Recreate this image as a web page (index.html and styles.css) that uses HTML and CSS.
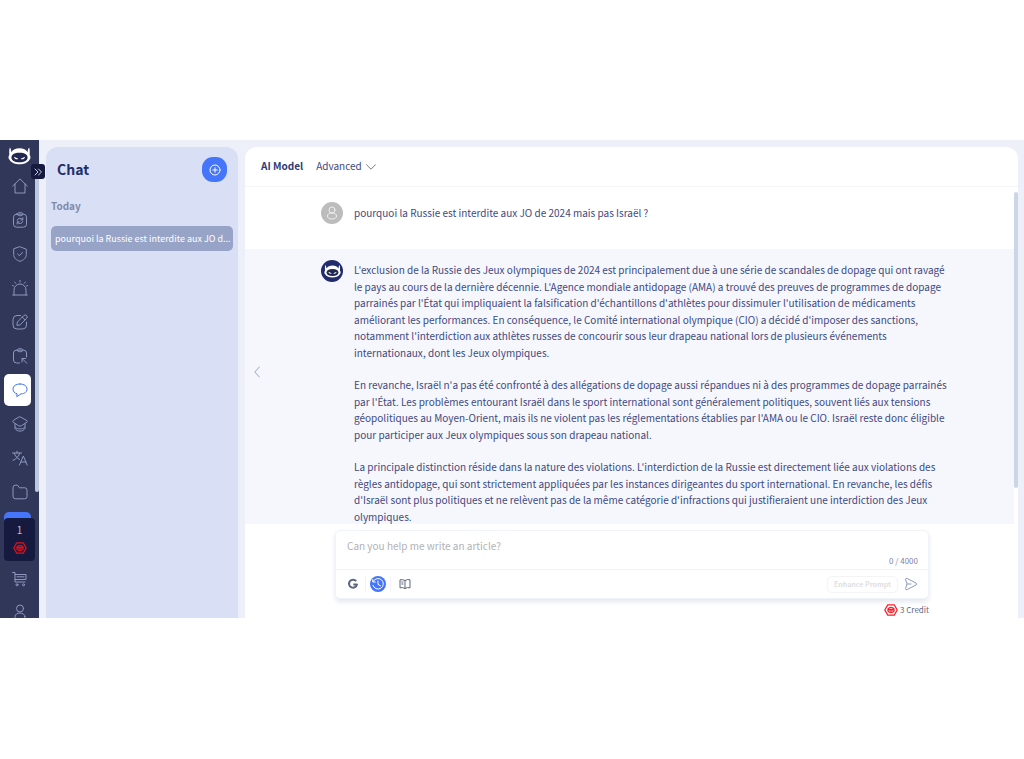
FILE: index.html
```html
<!DOCTYPE html>
<html lang="fr">
<head>
<meta charset="utf-8">
<meta name="viewport" content="width=device-width, initial-scale=1">
<title>Chat</title>
<link rel="stylesheet" href="styles.css">
</head>
<body>
<svg class="defs" aria-hidden="true">
  <symbol id="robot" viewBox="0 0 24 20">
    <path fill="currentColor" d="M1.800 1.500C3 2.500 3.300 4.500 3.300 6.500C5 4 8 2.300 12 2.300S19 4 20.700 6.500C20.700 4.500 21 2.500 22.200 1.500C22.900 4 22.900 6.500 22.700 9.500C23.900 10.500 23.900 13.500 22.500 14.500C20.500 18 16.500 19.200 12 19.200S3.500 18 1.500 14.500C.1 13.500 .1 10.500 1.300 9.500C1.100 6.500 1.100 4 1.800 1.500Z"/>
    <path class="robot-visor" d="M12 7C6.500 7 3.500 9 3.500 12S6.500 17 12 17S20.500 15 20.500 12S17.500 7 12 7Z"/>
    <path fill="currentColor" d="M6.200 11.200L10.800 13.300C9.500 14.700 6.800 14.200 6.200 11.200ZM17.800 11.200L13.200 13.300C14.500 14.700 17.200 14.200 17.800 11.200Z"/>
  </symbol>
  <symbol id="coin" viewBox="0 0 14 12">
    <path d="M3.800.8H10.200L13.200 6L10.200 11.200H3.800L.8 6Z"/>
    <path d="M4 4.800C5.500 2.800 8.500 2.800 10 4.800M4 7.200C5.500 9.200 8.500 9.200 10 7.200V5.500H4Z"/>
    <path d="M5.800 6.800H8.200"/>
  </symbol>
</svg>
<div class="app">
  <nav class="rail" aria-label="Navigation">
    <div class="rail-logo"><svg class="logo" aria-hidden="true"><use href="#robot"/></svg></div>
    <a class="rail-item" href="#" aria-label="Home"><svg class="icon" viewBox="0 0 16 16"><path d="M.8 8L8 .9L15.200 8M3 6V15H13V6"/></svg></a>
    <a class="rail-item" href="#" aria-label="Tasks"><svg class="icon" viewBox="0 0 16 16"><rect x="1.500" y="2.200" width="13" height="13" rx="3"/><path d="M5 2.200C5 0 11 0 11 2.200S5 4.200 5 2.200M5.300 8.300A2.800 2.800 0 0 1 10.300 7.400M10.800 5.800V7.900H8.800M10.700 9.500A2.800 2.800 0 0 1 5.700 10.400M5.200 12V9.900H7.200"/></svg></a>
    <a class="rail-item" href="#" aria-label="Security"><svg class="icon" viewBox="0 0 16 16"><path d="M8 .8L14.300 3.200V8.500C14.300 12 11.500 14.300 8 15.300C4.500 14.300 1.700 12 1.700 8.500V3.200ZM5.600 8L7.400 9.700L10.500 6.500"/></svg></a>
    <a class="rail-item" href="#" aria-label="Alerts"><svg class="icon" viewBox="0 0 16 16"><path d="M.8 15H15.200M2 15V10A6 6 0 0 1 14 10V15M8 .3V2M2.600 2L3.600 3.200M13.400 2L12.400 3.200M.4 5.500L1.500 6M15.600 5.500L14.500 6"/></svg></a>
    <a class="rail-item" href="#" aria-label="Write"><svg class="icon" viewBox="0 0 16 16"><path d="M8.500 1.500H5Q1 1.500 1 5.500V11Q1 15 5 15H10.500Q14.500 15 14.500 11V8M5 11L5.400 8L11.700 1.600A1.800 1.800 0 0 1 14.600 4.400L8.200 10.700ZM10.300 3L13 5.800"/></svg></a>
    <a class="rail-item" href="#" aria-label="Clipboard"><svg class="icon" viewBox="0 0 16 16"><path d="M7.500 15H4.500Q1.500 15 1.500 12V5Q1.500 2.200 4.500 2.200H11.500Q14.500 2.200 14.500 5V9M5 2.200C5 0 11 0 11 2.200S5 4.200 5 2.200M10 10.500L15 15.300M10 14V10.500H13.500"/></svg></a>
    <a class="rail-item active" href="#" aria-label="Chat" aria-current="page"><svg class="icon" viewBox="0 0 16 16"><path d="M8 2C3.500 2 1 4.200 1 7S3 11.500 5 11.700L4.800 14.700L9 11.900C13 11.700 15 9.800 15 7S12.500 2 8 2Z"/></svg></a>
    <a class="rail-item" href="#" aria-label="Learn"><svg class="icon" viewBox="0 0 16 16"><path d="M8 .8L14.800 4.500Q15.800 5.300 14.800 6.200L9.500 9.700Q8 10.500 6.500 9.700L1.200 6.200Q.2 5.300 1.200 4.500ZM3 8V12.500C5 16 11 16 13 12.500V8M3.200 11.500C6 13.500 10 13.500 12.800 11.500"/></svg></a>
    <a class="rail-item" href="#" aria-label="Translate"><svg class="icon" viewBox="0 0 16 16"><path d="M.5 3H9.500M5 1.200V3M2.200 3C3 6 5 8.200 7.500 9.500M7.800 3C7 6 4.500 8.800 1 10.500M7.500 15L11.300 6L15.200 15M8.800 12H13.800"/></svg></a>
    <a class="rail-item" href="#" aria-label="Files"><svg class="icon" viewBox="0 0 16 16"><path d="M1 3.500Q1 1.200 3.200 1.200H5.500L7.500 3.800H12.800Q15 3.800 15 6V12.500Q15 14.800 12.800 14.800H3.200Q1 14.800 1 12.500Z"/></svg></a>
    <div class="balance">
      <span>1</span>
      <svg class="coin" aria-hidden="true"><use href="#coin"/></svg>
    </div>
    <a class="rail-item" href="#" aria-label="Shop"><svg class="icon" viewBox="0 0 16 16"><path d="M.5 1.500H3V11H13M3 3.500H14V8.500H3M5 5.800H12"/><circle cx="5" cy="13.800" r="1"/><circle cx="11.500" cy="13.800" r="1"/></svg></a>
    <a class="rail-item" href="#" aria-label="Profile"><svg class="icon" viewBox="0 0 16 16"><circle cx="8" cy="4.500" r="3.500"/><ellipse cx="8" cy="12.500" rx="5" ry="3.500"/></svg></a>
    <span class="rail-scroll"></span>
    <button class="expand" type="button" aria-label="Expand"><svg viewBox="0 0 8 8"><path d="M1 1L4 4L1 7M4.500 1L7.500 4L4.500 7"/></svg></button>
  </nav>

  <aside class="history">
    <header class="history-head">
      <h1>Chat</h1>
      <button class="new-chat" type="button" aria-label="New chat"><svg viewBox="0 0 12 12"><circle cx="6" cy="6" r="5"/><path d="M6 3.800V8.200M3.800 6H8.200"/></svg></button>
    </header>
    <h2>Today</h2>
    <a class="history-item" href="#">pourquoi la Russie est interdite aux JO d...</a>
  </aside>

  <main class="chat">
    <header class="model-bar">
      <strong>AI Model</strong>
      <button class="model" type="button">Advanced <svg viewBox="0 0 10 6"><path d="M.5 .7L5 5.200L9.500 .7"/></svg></button>
    </header>
    <div class="thread">
      <section class="message">
        <span class="avatar user"><svg viewBox="0 0 12 14"><circle cx="6" cy="4" r="3"/><ellipse cx="6" cy="10" rx="4.500" ry="3"/></svg></span>
        <div class="text"><p>pourquoi la Russie est interdite aux JO de 2024 mais pas Israël ?</p></div>
      </section>
      <section class="message reply">
        <span class="avatar bot"><svg aria-hidden="true"><use href="#robot"/></svg></span>
        <div class="text">
          <p>L'exclusion de la Russie des Jeux olympiques de 2024 est principalement due à une série de scandales de dopage qui ont ravagé le pays au cours de la dernière décennie. L'Agence mondiale antidopage (AMA) a trouvé des preuves de programmes de dopage parrainés par l'État qui impliquaient la falsification d'échantillons d'athlètes pour dissimuler l'utilisation de médicaments améliorant les performances. En conséquence, le Comité international olympique (CIO) a décidé d'imposer des sanctions, notamment l'interdiction aux athlètes russes de concourir sous leur drapeau national lors de plusieurs événements internationaux, dont les Jeux olympiques.</p>
          <p>En revanche, Israël n'a pas été confronté à des allégations de dopage aussi répandues ni à des programmes de dopage parrainés par l'État. Les problèmes entourant Israël dans le sport international sont généralement politiques, souvent liés aux tensions géopolitiques au Moyen-Orient, mais ils ne violent pas les réglementations établies par l'AMA ou le CIO. Israël reste donc éligible pour participer aux Jeux olympiques sous son drapeau national.</p>
          <p>La principale distinction réside dans la nature des violations. L'interdiction de la Russie est directement liée aux violations des règles antidopage, qui sont strictement appliquées par les instances dirigeantes du sport international. En revanche, les défis d'Israël sont plus politiques et ne relèvent pas de la même catégorie d'infractions qui justifieraient une interdiction des Jeux olympiques.</p>
        </div>
      </section>
      <span class="thread-scroll"></span>
    </div>
    <button class="collapse" type="button" aria-label="Collapse"><svg viewBox="0 0 6 12"><path d="M5.300 1L.8 6L5.300 11"/></svg></button>
    <div class="composer-area">
      <form class="composer">
        <div class="prompt">
          <textarea rows="1" aria-label="Message" placeholder="Can you help me write an article?"></textarea>
          <span class="count">0 / 4000</span>
        </div>
        <div class="tools">
          <button class="tool" type="button" aria-label="Google search"><svg viewBox="0 0 12 12"><path class="g" d="M9.200 3.200A4 4 0 1 0 10 6.400H6.300"/></svg></button>
          <button class="tool" type="button" aria-label="History"><svg class="clock" viewBox="0 0 16 16"><circle class="disc" cx="8" cy="8" r="8"/><path d="M3.200 5.500A5.300 5.300 0 1 1 2.900 9.300M2.800 3.500V6H5.300M8 5V8.300L10.500 9.800"/></svg></button>
          <button class="tool" type="button" aria-label="Prompt library"><svg viewBox="0 0 12 12"><path d="M6 2.500Q3.500 1 1 1.800V9.800Q3.500 9 6 10.500Q8.500 9 11 9.800V1.800Q8.500 1 6 2.500V10.500M2.700 4H4M2.700 6H4"/></svg></button>
          <button class="enhance" type="button" disabled>Enhance Prompt</button>
          <button class="send" type="submit" aria-label="Send"><svg viewBox="0 0 14 14"><path d="M1.500 2.500Q1.500 .8 3.200 1.500L12 6Q13.500 7 12 8L3.200 12.500Q1.500 13.200 1.500 11.500L3 7ZM3 7H7"/></svg></button>
        </div>
      </form>
      <div class="cost"><svg class="coin" aria-hidden="true"><use href="#coin"/></svg>3 Credit</div>
    </div>
  </main>
</div>
</body>
</html>
```

FILE: styles.css
```css
* { box-sizing: border-box; }

body {
  margin: 0;
  height: 100vh;
  padding: 140px 0 141px;
  display: flex;
  flex-direction: column;
  background: #fff;
  color: #3f497f;
  font-family: "Noto Sans CJK SC", "Noto Sans", sans-serif;
  font-size: 10px;
  line-height: 1.65;
}

h1, h2, p { margin: 0; }

button {
  border: 0;
  padding: 0;
  background: none;
  color: inherit;
  font: inherit;
  cursor: pointer;
}

svg {
  display: block;
  fill: none;
  stroke: currentColor;
  stroke-linecap: round;
  stroke-linejoin: round;
}

.defs { position: absolute; width: 0; height: 0; }
#robot { stroke: none; }

.app {
  flex: 1;
  min-height: 0;
  display: flex;
  background: #edf0f9;
}

/* Icon rail */
.rail {
  position: relative;
  z-index: 1;
  flex: none;
  width: 39px;
  padding-left: 4px;
  display: flex;
  flex-direction: column;
  background: #313759;
  color: #8d97bd;
}

.rail-logo {
  flex: none;
  height: 29px;
  padding: 6px 0 0 4px;
  color: #fff;
}

.logo { width: 23px; height: 19px; }
.robot-visor { fill: #202850; }

.rail-item {
  flex: none;
  width: 27px;
  height: 34px;
  padding-right: 3px;
  display: flex;
  align-items: center;
  justify-content: flex-end;
  color: inherit;
}

.rail-item:last-of-type {
  flex: 0 1 24px;
  min-height: 0;
  padding-top: 8px;
  align-items: flex-start;
  overflow: hidden;
}

.rail-item.active {
  height: 32px;
  margin: 1px 0;
  border-radius: 5px;
  background: #fff;
  color: #4475fa;
}

.icon { flex: none; width: 16px; height: 16px; }

.balance {
  position: relative;
  flex: none;
  width: 31px;
  height: 43px;
  margin: 9px 0 1px;
  padding: 4px 0 7px;
  display: flex;
  flex-direction: column;
  align-items: center;
  justify-content: space-between;
  border-radius: 4px;
  background: #151a3e;
  color: #b9c0dc;
}

.balance::before {
  content: "";
  position: absolute;
  left: 0;
  top: -6px;
  width: 27px;
  height: 10px;
  z-index: -1;
  border-radius: 5px 5px 0 0;
  background: #4475fa;
}

.coin { width: 14px; height: 12px; color: #e0121f; stroke-width: 1.3; }

.rail-scroll {
  position: absolute;
  right: 0;
  top: 28px;
  width: 4px;
  height: 324px;
  border-radius: 2px;
  background: #bdc9de;
}

.expand {
  position: absolute;
  left: 31px;
  top: 24px;
  width: 14px;
  height: 15px;
  display: grid;
  place-items: center;
  border-radius: 3px;
  background: #151a3e;
  color: #c9cfe6;
}

.expand svg { width: 8px; height: 8px; }

/* Conversation list */
.history {
  flex: none;
  width: 192px;
  margin: 7px 7px 0;
  padding: 10px 5px 0;
  border-radius: 12px 12px 0 0;
  background: #d9dff4;
}

.history-head {
  display: flex;
  align-items: center;
  justify-content: space-between;
  padding: 0 6px;
}

h1 {
  color: #232d6b;
  font-size: 14px;
  font-weight: 700;
  line-height: 22px;
  padding-bottom: 2px;
}

.new-chat {
  width: 25px;
  height: 25px;
  display: grid;
  place-items: center;
  border-radius: 11px;
  background: #4475fa;
  color: #fff;
}

.new-chat svg { width: 12px; height: 12px; }

h2 {
  margin: 16px 0 12px;
  color: #7f8bab;
  font-size: 10px;
  font-weight: 700;
  line-height: 16px;
}

.history-item {
  display: block;
  padding-left: 4px;
  overflow: hidden;
  border-radius: 5px;
  background: #98a4c7;
  color: #fff;
  font-size: 9px;
  line-height: 25px;
  text-decoration: none;
  white-space: nowrap;
}

/* Conversation */
.chat {
  position: relative;
  flex: 1;
  min-width: 0;
  margin: 7px 6px 0 0;
  display: flex;
  flex-direction: column;
  border-radius: 12px 12px 0 0;
  background: #fff;
}

.model-bar {
  flex: none;
  height: 40px;
  padding: 0 16px;
  display: flex;
  align-items: center;
  gap: 13px;
  border-bottom: 1px solid #f3f5fb;
}

.model-bar strong { color: #303b76; font-weight: 700; }

.model {
  display: flex;
  align-items: center;
  gap: 4px;
}

.model svg { width: 10px; height: 6px; color: #747a8c; }

.thread {
  position: relative;
  flex: 1;
  min-height: 0;
  overflow: hidden;
}

.message {
  display: flex;
  align-items: flex-start;
  gap: 11px;
  margin-right: 4px;
  padding: 15px 66px 25px 76px;
}

.reply {
  padding-top: 11px;
  background: #f5f7fc;
}

.avatar {
  flex: none;
  width: 22px;
  height: 22px;
  display: grid;
  place-items: center;
  border-radius: 50%;
}

.user { background: #bcbcbc; color: #eee; }
.user svg { width: 12px; height: 14px; }
.bot { background: #222b6b; color: #fff; }
.bot svg { width: 17px; height: 14px; }

.text {
  flex: 1;
  display: grid;
  gap: 16px;
  padding-top: 3px;
}

.reply .text { padding-top: 2px; }

.thread-scroll {
  position: absolute;
  right: 0;
  top: 5px;
  width: 4px;
  height: 296px;
  border-radius: 2px;
  background: #cbd6e6;
}

.collapse {
  position: absolute;
  left: 9px;
  top: 219px;
  color: #98a3c0;
}

.collapse svg { width: 6px; height: 12px; }

/* Composer */
.composer-area {
  flex: none;
  padding: 6px 89px 0 90px;
}

.composer {
  border: 1px solid #f1f3fa;
  border-radius: 5px;
  background: #fff;
  box-shadow: 0 3px 5px #e6e8ef;
}

.prompt {
  height: 39px;
  padding: 7px 10px 0 11px;
  border-bottom: 1px solid #f1f3fa;
}

textarea {
  display: block;
  width: 100%;
  height: 17px;
  padding: 0;
  border: 0;
  outline: 0;
  resize: none;
  overflow: hidden;
  background: none;
  color: #3f497f;
  font: inherit;
}

textarea::placeholder { color: #b2b2b5; }

.count {
  display: block;
  color: #7e849f;
  font-size: 8px;
  line-height: 12px;
  text-align: right;
}

.tools {
  height: 28px;
  padding: 0 10px 0 5px;
  display: flex;
  align-items: center;
}

.tool {
  width: 25px;
  height: 16px;
  display: grid;
  place-items: center;
  border-right: 1px solid #f1f3f8;
  color: #5f6580;
}

.tool:nth-child(3) { border: 0; width: 28px; }
.tool svg { width: 12px; height: 12px; }
.tool .clock { width: 16px; height: 16px; color: #fff; }
.disc { fill: #4475fa; stroke: none; }
.g { stroke-width: 2; stroke-linecap: butt; }

.enhance {
  height: 17px;
  margin-left: auto;
  padding: 0 6px;
  border: 1px solid #f4f4f6;
  border-radius: 5px;
  color: #dfdfe2;
  font-size: 7px;
  font-weight: 700;
  line-height: 12px;
}

.send {
  margin-left: 6px;
  color: #8c99c4;
}

.send svg { width: 14px; height: 14px; }

.cost {
  height: 19px;
  padding-top: 3px;
  display: flex;
  align-items: center;
  justify-content: flex-end;
  gap: 2px;
  color: #626984;
  font-size: 8px;
}

.cost .coin { color: #fa1b25; }
```
